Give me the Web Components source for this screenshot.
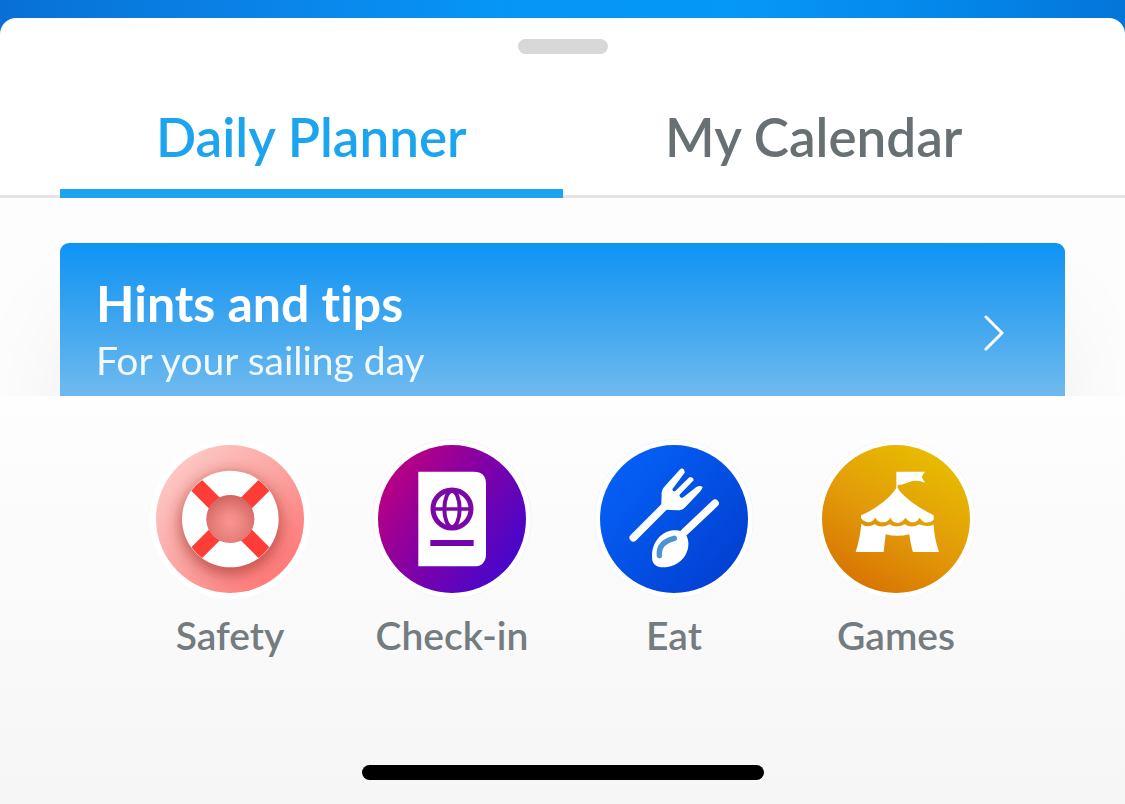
<!DOCTYPE html>
<html lang="en">
<head>
<meta charset="utf-8">
<meta name="viewport" content="width=device-width, initial-scale=1">
<title>Daily Planner</title>
<style>
  html, body { margin: 0; height: 100%; }
  body { font-family: Lato, "Open Sans", sans-serif; font-variant-ligatures: none; background: #0a86ea; }
</style>
</head>
<body>
<cruise-app>
  <bottom-sheet>
    <sheet-tabs slot="tabs">
      <sheet-tab selected>Daily Planner</sheet-tab>
      <sheet-tab>My Calendar</sheet-tab>
    </sheet-tabs>
    <tip-card href="#hints">
      Hints and tips
      <span slot="detail">For your sailing day</span>
    </tip-card>
  </bottom-sheet>
  <quick-nav slot="nav">
    <quick-link href="#safety">
      <svg slot="icon" viewBox="30 27 480 480" aria-hidden="true">
        <defs>
          <linearGradient id="sf" x1="0.1" y1="0.1" x2="0.9" y2="0.9"><stop offset="0" stop-color="#fecac6"/><stop offset=".5" stop-color="#fba5a2"/><stop offset="1" stop-color="#ff7674"/></linearGradient>
          <linearGradient id="sc" x1="0" y1="0" x2="0" y2="1"><stop offset="0" stop-color="#d96b67"/><stop offset="1" stop-color="#ff9c99"/></linearGradient>
          <radialGradient id="sg"><stop offset=".2" stop-color="#ff9c98"/><stop offset="1" stop-color="#cb5b57"/></radialGradient>
          <filter id="ss" x="-40%" y="-40%" width="180%" height="180%"><feGaussianBlur stdDeviation="22"/></filter>
          <clipPath id="sk"><circle cx="270" cy="267" r="222"/></clipPath>
          <clipPath id="sr"><circle cx="271" cy="267" r="144"/></clipPath>
        </defs>
        <circle cx="270" cy="267" r="240" fill="#fff"/>
        <circle cx="270" cy="267" r="222" fill="url(#sf)"/>
        <g clip-path="url(#sk)"><circle cx="271" cy="282" r="152" fill="#a02824" opacity=".6" filter="url(#ss)"/></g>
        <circle cx="271" cy="267" r="145" fill="#fff"/>
        <path clip-path="url(#sr)" d="M150 146 392 388M392 146 150 388" stroke="#fd3d36" stroke-width="46"/>
        <circle cx="271" cy="267" r="72" fill="url(#sc)"/>
        <circle cx="271" cy="267" r="72" fill="url(#sg)" opacity=".5"/>
      </svg>
      Safety
    </quick-link>
    <quick-link href="#check-in">
      <svg slot="icon" viewBox="30 27 480 480" aria-hidden="true">
        <defs><linearGradient id="pf" x1="0" y1="0.15" x2="0.95" y2="0.8"><stop offset="0" stop-color="#c3007c"/><stop offset=".5" stop-color="#8200a6"/><stop offset="1" stop-color="#4307ce"/></linearGradient></defs>
        <circle cx="270" cy="267" r="240" fill="#fff"/>
        <circle cx="270" cy="267" r="238" fill="none" stroke="#eee9f4" stroke-width="2"/>
        <circle cx="270" cy="267" r="222" fill="url(#pf)"/>
        <path d="M169 125H335Q372 125 372 162V371Q372 409 335 409H169Z" fill="#fff"/>
        <g fill="none" stroke="#7b08a6" stroke-width="12">
          <circle cx="270" cy="237" r="57" stroke-width="15"/>
          <ellipse cx="270" cy="237" rx="23" ry="54"/>
          <path d="M211 237H329" stroke-width="10"/>
        </g>
        <path d="M205 339H335" stroke="#7305ac" stroke-width="18"/>
      </svg>
      Check-in
    </quick-link>
    <quick-link href="#eat">
      <svg slot="icon" viewBox="30 27 480 480" aria-hidden="true">
        <defs><linearGradient id="ef" x1="0.1" y1="0.15" x2="0.9" y2="0.85"><stop offset="0" stop-color="#0560f6"/><stop offset="1" stop-color="#0240d2"/></linearGradient></defs>
        <circle cx="270" cy="267" r="240" fill="#fff"/>
        <circle cx="270" cy="267" r="238" fill="none" stroke="#e7f0f8" stroke-width="2"/>
        <circle cx="270" cy="267" r="222" fill="url(#ef)"/>
        <path d="M148 323 242 229M301 307 393 220" fill="none" stroke="#fff" stroke-width="23" stroke-linecap="round"/>
        <path d="M294 115Q303 118 302 128L265 178Q266 187 274 183L316 142Q328 139 329 151L286 195Q289 208 298 202L337 171Q350 165 356 172Q353 181 345 188L302 233Q295 241 279 241L246 239L232 224L233 187Q234 177 241 170L283 124Q288 117 294 115Z" fill="#fff"/>
        <path d="M205 391C198 348 224 307 266 301C282 299 302 305 308 318C317 338 314 362 300 382C283 405 257 413 232 412C216 410 208 403 205 391Z" fill="#fff"/>
        <path d="M226 377Q222 337 271 325" fill="none" stroke="#4b92d6" stroke-width="16" stroke-linecap="round"/>
      </svg>
      Eat
    </quick-link>
    <quick-link href="#games">
      <svg slot="icon" viewBox="30 27 480 480" aria-hidden="true">
        <defs><linearGradient id="gf" x1="0.8" y1="0.1" x2="0.3" y2="1"><stop offset="0" stop-color="#e7bb00"/><stop offset=".5" stop-color="#e29b09"/><stop offset="1" stop-color="#d87301"/></linearGradient></defs>
        <circle cx="270" cy="267" r="240" fill="#fff"/>
        <circle cx="270" cy="267" r="238" fill="none" stroke="#f6f1e6" stroke-width="2"/>
        <circle cx="270" cy="267" r="222" fill="url(#gf)"/>
        <path d="M271 125H357L347 140 357 158Q329 146 304 158Q289 165 275 165V174C293 203 340 235 383 256V270Q368 282 352 275Q346 271 341 263Q335 274 325 277Q309 278 298 263Q290 277 274 279Q260 277 253 263Q246 276 233 277Q216 278 208 263Q200 276 187 277Q173 275 165 264V256C209 237 250 206 271 174Z" fill="#fff"/>
        <path d="M166 281Q182 295 206 283Q225 296 251 283Q270 296 297 283Q316 296 340 283Q362 293 383 284Q385 326 399 366H321Q315 350 310 313Q274 322 239 313L233 366H149Q162 326 166 281Z" fill="#fff"/>
      </svg>
      Games
    </quick-link>
  </quick-nav>
</cruise-app>

<script>
const define = (name, html, setup) => {
  const template = document.createElement('template');
  template.innerHTML = html;
  customElements.define(name, class extends HTMLElement {
    constructor() {
      super();
      this.attachShadow({ mode: 'open' }).append(template.content.cloneNode(true));
    }
    connectedCallback() { if (setup) setup(this, this.shadowRoot); }
  });
};

define('cruise-app', `
  <style>
    :host { display: flex; flex-direction: column; height: 100vh; min-height: 600px; box-sizing: border-box; padding-top: 18px;
      background: linear-gradient(90deg, #086fd6, #087bdf 12%, #0a85ea 26%, #0596f5 45%, #0698f7 65%, #0486e9 85%, #0475d9) 0 0 / 100% 60px no-repeat #fff; }
    main { flex: 1; min-height: 0; display: flex; }
  </style>
  <main><slot></slot></main>
  <slot name="nav"></slot>`);

define('bottom-sheet', `
  <style>
    :host { display: flex; flex-direction: column; flex: 1; min-width: 0; overflow: hidden; background: #fff; border-radius: 16px 16px 0 0; }
    .handle { flex: none; width: 90px; height: 15px; margin: 21px auto 47px; border-radius: 8px; background: #d8d8d8; }
    .list { flex: 1; min-height: 0; overflow: hidden; padding: 45px 60px 0; background: #fdfdfd; }
  </style>
  <div class="handle"></div>
  <slot name="tabs"></slot>
  <div class="list"><slot></slot></div>`);

define('sheet-tabs', `
  <style>
    :host { display: block; flex: none; }
    div { display: flex; padding: 0 60px; box-shadow: inset 0 -3px #e3e4e5; }
  </style>
  <div role="tablist"><slot></slot></div>`);

define('sheet-tab', `
  <style>
    :host { display: flex; flex: 1; }
    button { flex: 1; height: 97px; margin: 0; padding: 0 0 16px; border: 0; border-bottom: 9px solid transparent;
      background: none; font: 600 53px/60px Lato, sans-serif; color: #687074; white-space: nowrap; cursor: pointer; }
    :host([selected]) button { color: #1ca5ee; border-color: #1ca5ee; }
  </style>
  <button type="button" role="tab"><slot></slot></button>`,
  (el, root) => root.querySelector('button').setAttribute('aria-selected', el.hasAttribute('selected')));

define('tip-card', `
  <style>
    :host { display: block; }
    a { display: flex; align-items: center; height: 180px; box-sizing: border-box; padding: 0 60px 0 36px; border-radius: 9px; color: #fff; text-decoration: none;
      background: linear-gradient(#0d94f5, #1c98f2 12%, #46a9ef 50%, #6ab8ef 80%, #70bbef); box-shadow: 0 70px 100px rgba(0, 0, 0, .06); }
    .text { flex: 1; padding-bottom: 6px; }
    strong, .detail { display: block; }
    strong { font-size: 50px; font-weight: 700; line-height: 60px; }
    .detail { font-size: 39px; font-weight: 400; line-height: 54px; opacity: .92; }
    svg { flex: none; width: 22px; height: 36px; }
  </style>
  <a>
    <span class="text"><strong><slot></slot></strong><span class="detail"><slot name="detail"></slot></span></span>
    <svg viewBox="0 0 22 36" fill="none" stroke="#fff" stroke-width="3" stroke-linecap="round" stroke-linejoin="round" aria-hidden="true"><path d="M3 2 19 18 3 34"/></svg>
  </a>`,
  (el, root) => root.querySelector('a').href = el.getAttribute('href'));

define('quick-nav', `
  <style>
    :host { display: block; flex: none; background: linear-gradient(#fefefe, #f6f6f6); }
    nav { display: flex; padding: 43px 118px 105px 119px; }
    .home { width: 402px; max-width: 60%; height: 15px; margin: 0 auto; border-radius: 8px; background: #000; }
    footer { padding-bottom: 24px; }
  </style>
  <nav aria-label="Quick links"><slot></slot></nav>
  <footer><div class="home"></div></footer>`);

define('quick-link', `
  <style>
    :host { display: flex; flex: 1; min-width: 0; justify-content: center; }
    a { display: flex; flex-direction: column; align-items: center; gap: 11px; color: #747c80; text-decoration: none;
      font-size: 39px; font-weight: 600; line-height: 50px; white-space: nowrap; }
    ::slotted(svg) { display: block; width: 160px; height: 160px; }
  </style>
  <a><slot name="icon"></slot><span><slot></slot></span></a>`,
  (el, root) => root.querySelector('a').href = el.getAttribute('href'));
</script>
</body>
</html>
